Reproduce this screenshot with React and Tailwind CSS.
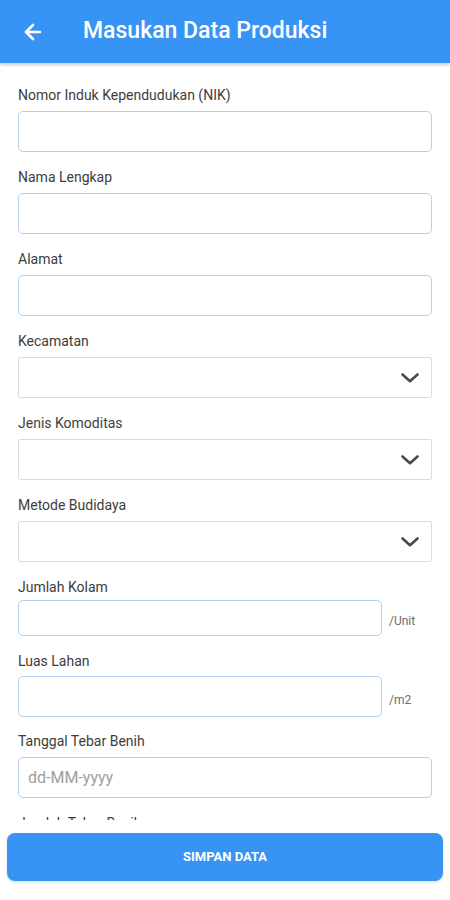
import { ArrowLeft } from "lucide-react";

const Label = ({ children, mb = "mb-2" }) => (
    <p className={`text-[14px] leading-4 text-[#3d3d3d] ${mb}`}>{children}</p>
);

const TextField = ({ label, placeholder }) => (
    <div className="mb-[17px]">
        <Label>{label}</Label>
        <div className="h-[41px] rounded-[5px] border border-[#b5cfec] bg-white flex items-center px-[9px]">
            {placeholder && <span className="text-[16px] text-[#9e9e9e]">{placeholder}</span>}
        </div>
    </div>
);

const SelectField = ({ label }) => (
    <div className="mb-[17px]">
        <Label>{label}</Label>
        <div className="h-[41px] rounded-[2px] border border-[#dcdcdc] bg-white flex items-center justify-end pr-[12px]">
            <svg width="18" height="10" viewBox="0 0 18 10" fill="none">
                <path d="M1.5 1.5 9 8.2 16.5 1.5" stroke="#4a4a4a" strokeWidth="2.6" strokeLinecap="round" strokeLinejoin="round" />
            </svg>
        </div>
    </div>
);

const UnitField = ({ label, unit, height, mb, labelMb }) => (
    <div className={mb}>
        <Label mb={labelMb}>{label}</Label>
        <div className="flex items-center">
            <div className={`flex-1 rounded-[5px] border border-[#b5cfec] bg-white ${height}`} />
            <span className="w-[50px] pl-[7px] pt-[6px] text-[12px] text-[#6b6b6b]">{unit}</span>
        </div>
    </div>
);

export default function App() {
    return (
        <div className="h-[900px] w-[450px] flex flex-col bg-white font-['Roboto',sans-serif] overflow-hidden">
            {/* Header */}
            <div className="h-[63px] shrink-0 bg-[#3794f4] flex items-center shadow-[0_2px_3px_rgba(0,0,0,0.2)] z-10">
                <ArrowLeft size={24} strokeWidth={2.6} className="text-white ml-[21px]" />
                <h1 className="ml-[38px] text-[23px] font-medium text-white">Masukan Data Produksi</h1>
            </div>

            {/* Form */}
            <div className="flex-1 overflow-hidden px-[18px] pt-[24px]">
                <TextField label="Nomor Induk Kependudukan (NIK)" />
                <TextField label="Nama Lengkap" />
                <TextField label="Alamat" />
                <SelectField label="Kecamatan" />
                <SelectField label="Jenis Komoditas" />
                <SelectField label="Metode Budidaya" />
                <UnitField label="Jumlah Kolam" unit="/Unit" height="h-[36px]" mb="mb-[17px]" labelMb="mb-[5px]" />
                <UnitField label="Luas Lahan" unit="/m2" height="h-[41px]" mb="mb-[16px]" labelMb="mb-[7px]" />
                <TextField label="Tanggal Tebar Benih" placeholder="dd-MM-yyyy" />
                <TextField label="Jumlah Tebar Benih" />
            </div>

            {/* Footer */}
            <div className="shrink-0 bg-white px-[7px] pt-[13px] pb-[19px]">
                <button className="w-full h-[48px] rounded-[8px] bg-[#3794f4] text-white text-[13px] font-bold shadow-[0_1px_3px_rgba(0,0,0,0.15)]">
                    SIMPAN DATA
                </button>
            </div>
        </div>
    );
}
